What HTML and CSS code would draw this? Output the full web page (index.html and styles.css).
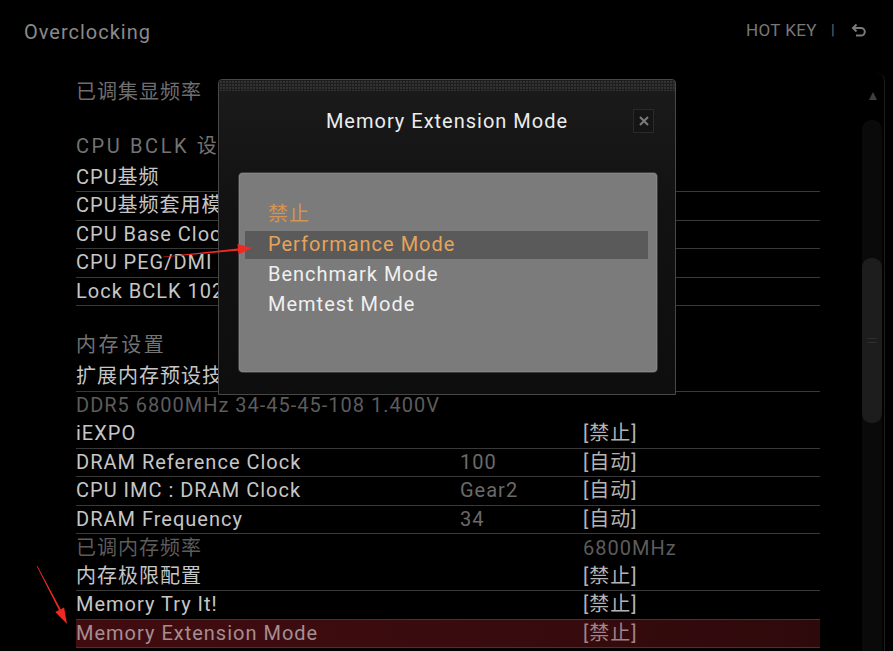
FILE: index.html
```html
<!DOCTYPE html>
<html lang="zh-CN">
<head>
<meta charset="utf-8">
<title>Overclocking</title>
<link rel="stylesheet" href="styles.css">
</head>
<body>
<div class="screen">
  <header class="topbar">
    <div class="page-title">Overclocking</div>
    <div class="hotkey">
      <span>HOT KEY</span>
      <span class="sep">|</span>
      <svg class="back" width="16" height="16" viewBox="0 0 16 16" aria-hidden="true">
        <path d="M5.5 2.5 L2 6 L5.5 9.5" fill="none" stroke="#7a7a7a" stroke-width="2" stroke-linejoin="miter"/>
        <path d="M2.5 6 H10 A3.8 3.8 0 0 1 10 13.6 H5" fill="none" stroke="#7a7a7a" stroke-width="2"/>
      </svg>
    </div>
  </header>

  <main class="body">
    <section class="list">
      <div class="row dim"><span>已调集显频率</span></div>
      <div class="row"></div>
      <div class="row head"><span>CPU BCLK 设置</span></div>
      <div class="row lined"><span>CPU基频</span></div>
      <div class="row lined"><span>CPU基频套用模式</span></div>
      <div class="row lined"><span>CPU Base Clock Offset</span></div>
      <div class="row lined"><span>CPU PEG/DMI Clock</span></div>
      <div class="row lined"><span>Lock BCLK 102.4MHz</span></div>
      <div class="row"></div>
      <div class="row head"><span>内存设置</span></div>
      <div class="row lined"><span>扩展内存预设技术(XMP)</span></div>
      <div class="row dim"><span>DDR5 6800MHz 34-45-45-108 1.400V</span></div>
      <div class="row lined"><span>iEXPO</span><span></span><span class="val">[禁止]</span></div>
      <div class="row lined"><span>DRAM Reference Clock</span><span class="cur">100</span><span class="val">[自动]</span></div>
      <div class="row lined"><span>CPU IMC : DRAM Clock</span><span class="cur">Gear2</span><span class="val">[自动]</span></div>
      <div class="row lined"><span>DRAM Frequency</span><span class="cur">34</span><span class="val">[自动]</span></div>
      <div class="row dim"><span>已调内存频率</span><span></span><span>6800MHz</span></div>
      <div class="row lined"><span>内存极限配置</span><span></span><span class="val">[禁止]</span></div>
      <div class="row lined"><span>Memory Try It!</span><span></span><span class="val">[禁止]</span></div>
      <div class="row lined current"><span>Memory Extension Mode</span><span></span><span class="val">[禁止]</span></div>
    </section>

    <aside class="scroll">
      <div class="scroll-up"></div>
      <div class="track">
        <div class="thumb"><i></i><i></i></div>
      </div>
    </aside>
  </main>

  <div class="dialog">
    <div class="hatch"></div>
    <div class="dialog-head">
      <span></span>
      <div class="dialog-title">Memory Extension Mode</div>
      <div class="close">
        <svg width="10" height="10" viewBox="0 0 10 10" aria-hidden="true">
          <path d="M1 1 L9 9 M9 1 L1 9" stroke="#7c7c7c" stroke-width="2"/>
        </svg>
      </div>
    </div>
    <div class="panel">
      <div class="opt orig">禁止</div>
      <div class="opt sel">Performance Mode</div>
      <div class="opt">Benchmark Mode</div>
      <div class="opt">Memtest Mode</div>
    </div>
  </div>

  <svg class="arrows" width="893" height="651" viewBox="0 0 893 651" aria-hidden="true">
    <polygon points="163,256.7 240,248.2 240.2,250.6 163,257.3" fill="#ee2a22"/>
    <polygon points="252,248 238.6,254.6 237.4,244" fill="#ee2a22"/>
    <polygon points="36.7,566.2 59.2,610.5 60.8,609.5 37.3,565.8" fill="#ee2a22"/>
    <polygon points="67,624 55.3,612.1 64.1,607.5" fill="#ee2a22"/>
  </svg>
</div>
</body>
</html>
```

FILE: styles.css
```css
html, body {
  margin: 0;
  padding: 0;
  background: #000;
}

body {
  font-family: Roboto, "Noto Sans CJK SC", sans-serif;
  color: #c6c6c6;
}

.screen {
  position: relative;
  width: 893px;
  height: 651px;
  overflow: hidden;
  background: #000;
}

/* ---------- top bar ---------- */
.topbar {
  height: 73px;
  box-sizing: border-box;
  padding: 20px 26px 0 24px;
  display: flex;
  justify-content: space-between;
  align-items: flex-start;
}

.page-title {
  font-size: 20px;
  line-height: 24px;
  letter-spacing: 1px;
  color: #8a8a8a;
}

.hotkey {
  display: flex;
  align-items: center;
  gap: 14px;
  font-size: 17px;
  line-height: 20px;
  letter-spacing: 0.4px;
  color: #787878;
}

.hotkey .sep {
  font-size: 15px;
  color: #6a6a6a;
}

.back {
  display: block;
  margin-left: 2px;
}

/* ---------- main list ---------- */
.body {
  display: flex;
  padding-left: 76px;
  height: 578px;
}

.list {
  width: 744px;
  padding-top: 5px;
}

.row {
  display: grid;
  grid-template-columns: 384px 123px 1fr;
  grid-template-rows: 1fr;
  align-items: center;
  height: 28.5px;
  box-sizing: border-box;
  padding-bottom: 1px;
  font-size: 20px;
  line-height: 20px;
  letter-spacing: 1px;
  white-space: nowrap;
  color: #c6c6c6;
}

.row.lined {
  border-bottom: 1px solid #393939;
}

.row.dim {
  color: #5c5c5c;
}

.row.dim:first-child {
  color: #6e6e6e;
}

.row.head {
  color: #737373;
  letter-spacing: 2.6px;
  padding-bottom: 7px;
}

.cur {
  color: #6a6a6a;
}

.val {
  color: #b3b3b3;
}

.row.current {
  background: linear-gradient(90deg, #410c10 0%, #380b0e 60%, #2e090b 100%);
  color: #a68e90;
}

.row.current .val {
  color: #a08487;
}

/* ---------- scrollbar ---------- */
.scroll {
  margin-left: 42px;
  width: 22px;
  border-right: 1px solid #1c1c1c;
  border-top-right-radius: 8px;
  display: flex;
  flex-direction: column;
  align-items: flex-start;
}

.scroll-up {
  margin: 19px 0 0 7px;
  width: 0;
  height: 0;
  border-left: 4.5px solid transparent;
  border-right: 4.5px solid transparent;
  border-bottom: 8px solid #3f3f3f;
}

.track {
  margin-top: 20px;
  width: 20px;
  flex: 1;
  background: #0a0a0a;
  border-radius: 9px 9px 0 0;
}

.thumb {
  margin-top: 138px;
  height: 165px;
  background: #1d1d1d;
  border-radius: 9px;
  display: flex;
  flex-direction: column;
  align-items: center;
  justify-content: center;
  gap: 3px;
}

.thumb i {
  display: block;
  width: 10px;
  height: 1px;
  background: #2e2e2e;
}

/* ---------- dialog ---------- */
.dialog {
  position: absolute;
  left: 218px;
  top: 79px;
  width: 458px;
  height: 316px;
  box-sizing: border-box;
  border: 1px solid #484848;
  border-radius: 4px 4px 0 0;
  background: linear-gradient(180deg, #1b1b1b 0%, #121212 40%, #0e0e0e 100%);
  display: flex;
  flex-direction: column;
}

.hatch {
  height: 11px;
  border-radius: 3px 3px 0 0;
  background-color: #333;
  background-image:
    linear-gradient(90deg, #1e1e1e 1px, transparent 1px),
    linear-gradient(180deg, #1e1e1e 1px, transparent 1px);
  background-size: 3px 3px;
}

.dialog-head {
  height: 82px;
  box-sizing: border-box;
  padding-top: 18px;
  display: grid;
  grid-template-columns: 1fr auto 1fr;
  align-items: start;
}

.dialog-title {
  font-size: 20px;
  line-height: 24px;
  letter-spacing: 1px;
  color: #ececec;
  white-space: nowrap;
}

.close {
  justify-self: end;
  margin-right: 21px;
  width: 21px;
  height: 24px;
  box-sizing: border-box;
  border: 1px solid #2a2a2a;
  background: #151515;
  display: flex;
  align-items: center;
  justify-content: center;
}

.panel {
  margin: 0 18px 0 20px;
  height: 199px;
  box-sizing: border-box;
  padding-top: 26px;
  background: #7b7b7b;
  border-radius: 4px;
  box-shadow: inset 0 0 0 1px #868686, 0 0 0 1px #3c3c3c;
}

.opt {
  height: 30px;
  line-height: 30px;
  margin: 0 9px 0 6px;
  padding-left: 23px;
  font-size: 20px;
  letter-spacing: 1px;
  color: #f0f0f0;
  white-space: nowrap;
}

.opt.orig {
  color: #d4944f;
}

.opt.sel {
  color: #e6a35b;
  background: linear-gradient(#5a5a5a, #5a5a5a) 0 2px / 100% 28px no-repeat;
}

/* ---------- annotation arrows ---------- */
.arrows {
  position: absolute;
  left: 0;
  top: 0;
  pointer-events: none;
}
```
